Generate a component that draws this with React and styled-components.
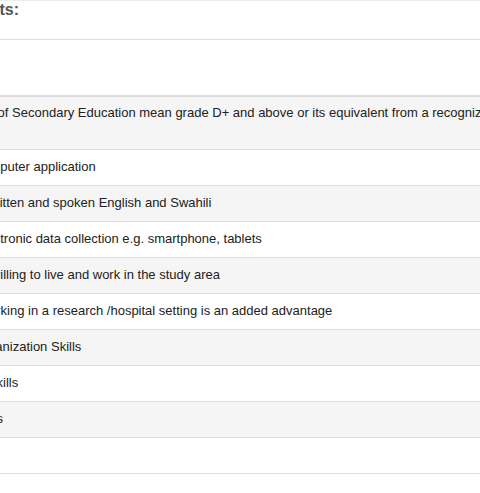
import React from 'react';
import styled, { createGlobalStyle } from 'styled-components';

const Global = createGlobalStyle`
  html, body {
    margin: 0;
    padding: 0;
    background: #ffffff;
    overflow: hidden;
  }
  body {
    font-family: "Liberation Sans", Arial, Helvetica, sans-serif;
  }
`;

const Viewport = styled.div`
  width: 480px;
  height: 493px;
  overflow: hidden;
`;

const Section = styled.section`
  width: 636px;
  margin-left: -111px;
`;

const Title = styled.h4`
  margin: 0 0 20px;
  padding: 0 0 20px 18px;
  border-top: 1px solid #eeeeee;
  border-bottom: 1px solid #dddddd;
  font-size: 16px;
  line-height: 18px;
  font-weight: bold;
  color: #555555;
`;

const Table = styled.table`
  width: 100%;
  table-layout: fixed;
  border-collapse: separate;
  border-spacing: 0;
  font-size: 13px;
  line-height: 17px;
  color: #222222;
`;

const HeadCell = styled.th`
  padding: 9px 8px;
  border-bottom: 2px solid #dddddd;
  text-align: left;
  font-weight: bold;
`;

const Row = styled.tr`
  background: ${(p) => (p.$striped ? '#f5f5f5' : '#ffffff')};
`;

const Cell = styled.td`
  padding: ${(p) => (p.$first ? '7px 8px 11px' : '8px 8px 10px')};
  vertical-align: top;
  border-top: ${(p) => (p.$first ? 'none' : '1px solid #dddddd')};
  border-bottom: ${(p) => (p.$last ? '1px solid #dddddd' : 'none')};
  text-indent: ${(p) => p.$indent}px;
`;

const requirements = [
  { text: 'Kenya Certificate of Secondary Education mean grade D+ and above or its equivalent from a recognized institution', indent: -2 },
  { text: 'Knowledge in computer application', indent: -3 },
  { text: 'Proficiency in written and spoken English and Swahili', indent: 8 },
  { text: 'Experience in electronic data collection e.g. smartphone, tablets', indent: -3 },
  { text: 'Must be willing to live and work in the study area', indent: 44 },
  { text: 'Experience working in a research /hospital setting is an added advantage', indent: 14 },
  { text: 'Good Communication and Organization Skills', indent: -78 },
  { text: 'Good Interpersonal Skills', indent: -24 },
  { text: 'Attention to details', indent: -1 },
  { text: '\u00a0', indent: 0 },
];

export default function App() {
  return (
    <Viewport>
      <Global />
      <Section>
        <Title>Requirements:</Title>
        <Table>
          <thead>
            <tr>
              <HeadCell>{'\u00a0'}</HeadCell>
            </tr>
          </thead>
          <tbody>
            {requirements.map((r, i) => (
              <Row key={i} $striped={i % 2 === 0}>
                <Cell
                  $first={i === 0}
                  $last={i === requirements.length - 1}
                  $indent={r.indent}
                >
                  {r.text}
                </Cell>
              </Row>
            ))}
          </tbody>
        </Table>
      </Section>
    </Viewport>
  );
}
